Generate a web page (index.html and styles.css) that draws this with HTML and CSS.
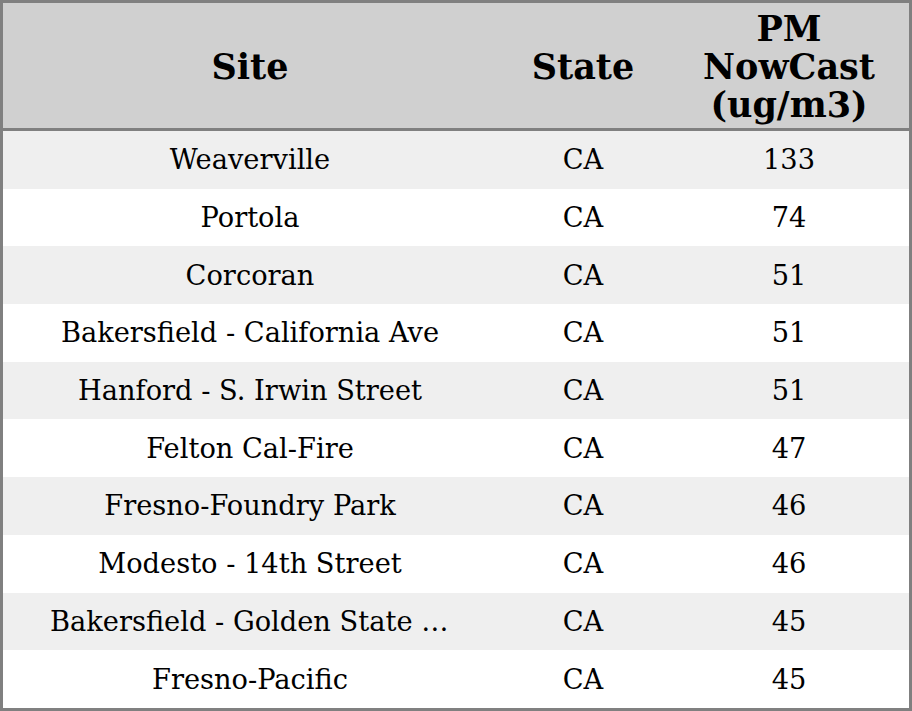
FILE: index.html
```html
<!DOCTYPE html>
<html>
<head>
<meta charset="utf-8">
<link rel="stylesheet" href="styles.css">
</head>
<body>
<table class="data">
  <colgroup>
    <col class="c-site">
    <col class="c-state">
    <col class="c-pm">
  </colgroup>
  <thead>
    <tr><th>Site</th><th>State</th><th>PM NowCast (ug/m3)</th></tr>
  </thead>
  <tbody>
    <tr><td class="site">Weaverville</td><td>CA</td><td>133</td></tr>
    <tr><td class="site">Portola</td><td>CA</td><td>74</td></tr>
    <tr><td class="site">Corcoran</td><td>CA</td><td>51</td></tr>
    <tr><td class="site">Bakersfield - California Ave</td><td>CA</td><td>51</td></tr>
    <tr><td class="site">Hanford - S. Irwin Street</td><td>CA</td><td>51</td></tr>
    <tr><td class="site">Felton Cal-Fire</td><td>CA</td><td>47</td></tr>
    <tr><td class="site">Fresno-Foundry Park</td><td>CA</td><td>46</td></tr>
    <tr><td class="site">Modesto - 14th Street</td><td>CA</td><td>46</td></tr>
    <tr><td class="site">Bakersfield - Golden State Avenue</td><td>CA</td><td>45</td></tr>
    <tr><td class="site">Fresno-Pacific</td><td>CA</td><td>45</td></tr>
  </tbody>
</table>
</body>
</html>
```
FILE: styles.css
```css
html, body {
  margin: 0;
  padding: 0;
  background: #ffffff;
}
.data {
  width: 912px;
  height: 711px;
  border-collapse: separate;
  border-spacing: 0;
  border: 3px solid #808080;
  table-layout: fixed;
  font-family: "DejaVu Serif", serif;
  color: #000;
  box-sizing: border-box;
}
.c-site { width: 494px; }
.c-state { width: 172px; }
.c-pm { width: 240px; }
.data thead th {
  background: #d0d0d0;
  font-size: 35px;
  line-height: 38px;
  font-weight: bold;
  text-align: center;
  vertical-align: middle;
  height: 128px;
  padding: 2px 40px 0;
  border-bottom: 3px solid #808080;
  box-sizing: border-box;
}
.data thead th:nth-child(2), .data thead th:nth-child(3) { padding: 2px 10px 0; }
.data tbody td {
  font-size: 27.25px;
  text-align: center;
  vertical-align: middle;
  padding: 0 10px;
  white-space: nowrap;
  overflow: hidden;
  text-overflow: ellipsis;
}
.data tbody td.site { padding: 0 47px; }
.data tbody tr:nth-child(odd) td { background: #efefef; }
.data tbody tr:nth-child(even) td { background: #ffffff; }
```
